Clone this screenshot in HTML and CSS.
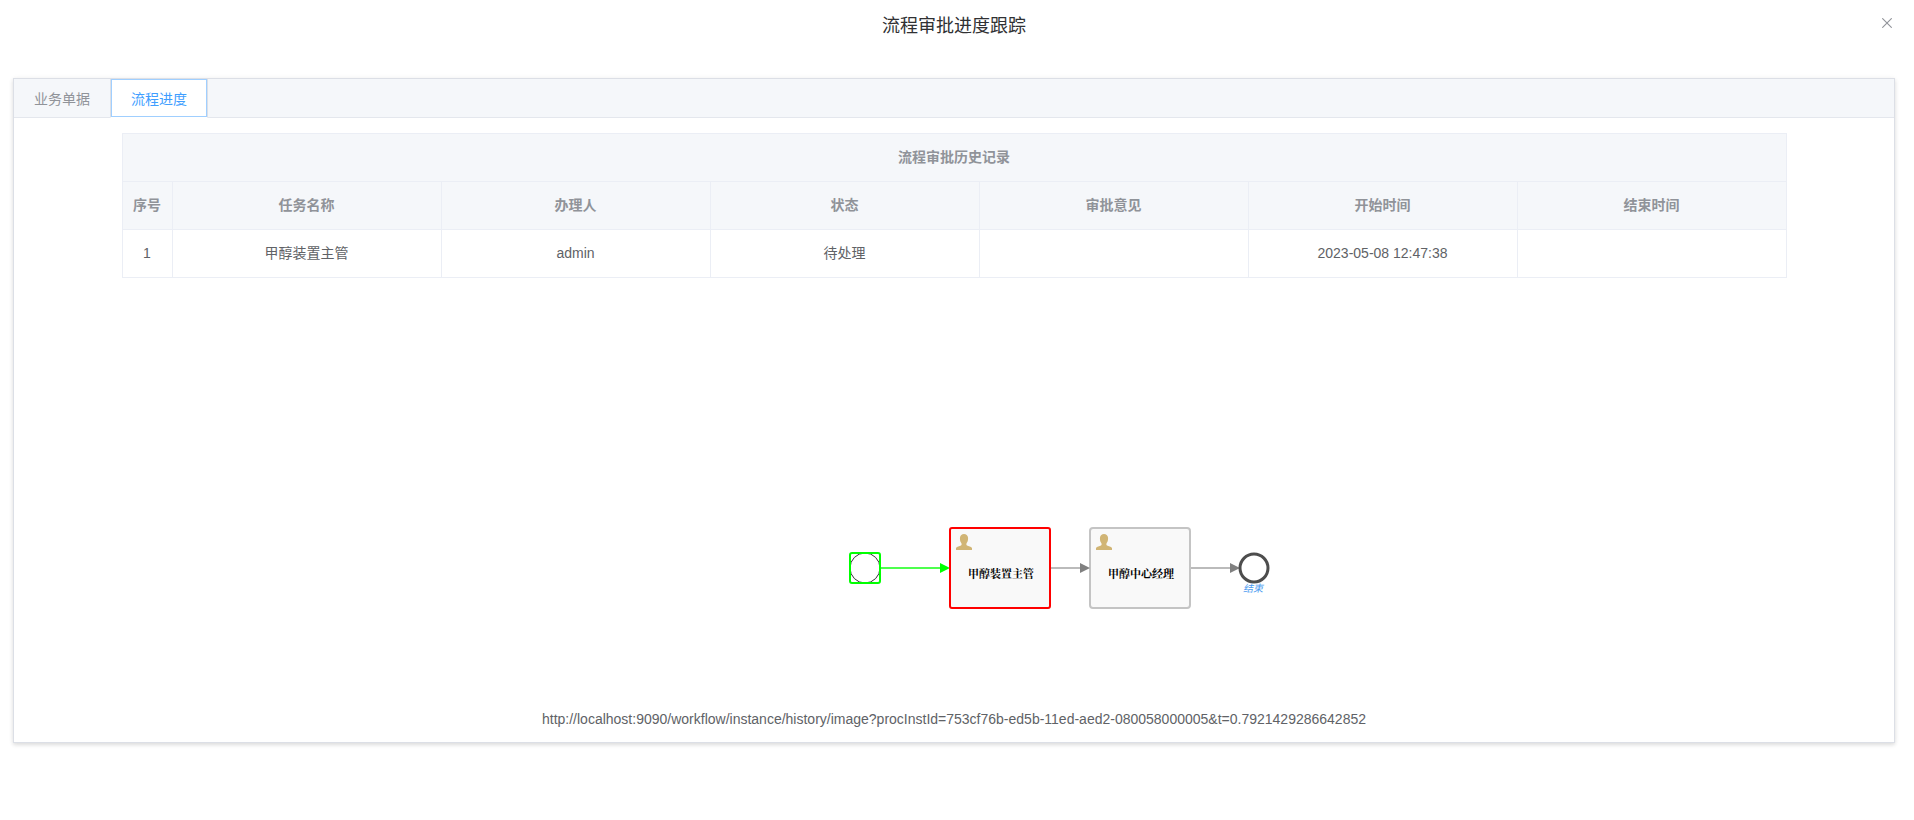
FILE: index.html
```html
<!DOCTYPE html>
<html lang="zh-CN">
<head>
<meta charset="utf-8">
<meta name="viewport" content="width=device-width, initial-scale=1">
<title>流程审批进度跟踪</title>
<link rel="stylesheet" href="styles.css">
</head>
<body>
<main class="dialog">
  <header class="dialog-header">
    <h1 class="dialog-title">流程审批进度跟踪</h1>
    <button class="dialog-close" type="button" aria-label="关闭">
      <svg width="10" height="10" viewBox="0 0 10 10" aria-hidden="true"><path d="M0.3 0.3 9.7 9.7M9.7 0.3 0.3 9.7"/></svg>
    </button>
  </header>
  <section class="panel">
    <div class="tabs" role="tablist">
      <button class="tab" type="button" role="tab" aria-selected="false">业务单据</button>
      <button class="tab tab-active" type="button" role="tab" aria-selected="true">流程进度</button>
    </div>
    <div class="panel-body" role="tabpanel">
      <table class="history">
        <colgroup><col class="col-index"><col><col><col><col><col><col></colgroup>
        <thead>
          <tr><th colspan="7">流程审批历史记录</th></tr>
          <tr><th>序号</th><th>任务名称</th><th>办理人</th><th>状态</th><th>审批意见</th><th>开始时间</th><th>结束时间</th></tr>
        </thead>
        <tbody>
          <tr><td>1</td><td>甲醇装置主管</td><td>admin</td><td>待处理</td><td></td><td>2023-05-08 12:47:38</td><td></td></tr>
        </tbody>
      </table>
      <svg class="diagram" width="640" height="433" viewBox="0 0 640 433" role="img" aria-label="流程图">
        <defs>
          <path id="user" d="M0 16v-2c1-1.500 3.500-1.500 5-2.500.8-.5.8-1.500.3-2.500C4 7.500 3.800 5 4 3.500 4.300 1.200 5.800 0 8 0s3.700 1.200 4 3.500c.2 1.500 0 4-1.300 5.500-.5 1-.5 2 .3 2.500 1.500 1 4 1 5 2.500v2z"/>
        </defs>
        <circle class="start-ring" cx="231" cy="290" r="15"/>
        <rect class="start-box" x="216" y="275" width="30" height="30" rx="2"/>
        <path class="flow flow-done" d="M247 290h60"/>
        <path class="arrow-done" d="M306 285v10l10-5z"/>
        <path class="flow" d="M417 290h30M557 290h40"/>
        <rect class="task task-current" x="316" y="250" width="100" height="80" rx="2"/>
        <rect class="task" x="456" y="250" width="100" height="80" rx="3"/>
        <path class="arrow" d="M446 285v10l10-5zM596 285v10l10-5z"/>
        <use class="user" href="#user" x="322" y="256"/>
        <use class="user" href="#user" x="462" y="256"/>
        <text class="task-label" x="367" y="300">甲醇装置主管</text>
        <text class="task-label" x="507" y="300">甲醇中心经理</text>
        <circle class="end-ring" cx="620" cy="290" r="14"/>
        <text class="end-label" x="619" y="314">结束</text>
      </svg>
      <p class="image-url">http://localhost:9090/workflow/instance/history/image?procInstId=753cf76b-ed5b-11ed-aed2-080058000005&amp;t=0.7921429286642852</p>
    </div>
  </section>
</main>
</body>
</html>
```
FILE: styles.css
```css
* {
  box-sizing: border-box;
}

body {
  margin: 0;
  background: #fff;
  color: #606266;
  font-family: "Liberation Sans", "Noto Sans CJK SC", sans-serif;
  font-size: 14px;
}

.dialog {
  padding: 14px 19px 14px 13px;
}

.dialog-header {
  display: grid;
  grid-template-columns: 16px 1fr 16px;
  margin-bottom: 40px;
}

.dialog-title {
  grid-column: 2;
  margin: 0;
  color: #303133;
  font-size: 18px;
  font-weight: 400;
  line-height: 24px;
  text-align: center;
}

.dialog-close {
  display: flex;
  align-items: center;
  justify-content: center;
  height: 18px;
  padding: 0;
  border: 0;
  background: none;
  cursor: pointer;
}

.dialog-close path {
  fill: none;
  stroke: #909399;
  stroke-width: 1.1;
}

.panel {
  border: 1px solid #dcdfe6;
  background: #fff;
  box-shadow: 0 2px 4px rgba(0, 0, 0, 0.12), 0 0 6px rgba(0, 0, 0, 0.04);
}

.tabs {
  display: flex;
  border-bottom: 1px solid #e4e7ed;
  background: #f5f7fa;
}

.tab {
  height: 39px;
  margin: 0 0 -1px -1px;
  padding: 0 20px;
  border: 1px solid transparent;
  border-top: 0;
  background: none;
  color: #909399;
  font: inherit;
  cursor: pointer;
}

.tab-active {
  border-right-color: #dcdfe6;
  border-bottom-color: #fff;
  border-left-color: #dcdfe6;
  background: #fff;
  box-shadow: inset 0 0 0 1px #a0cfff;
  color: #409eff;
}

.panel-body {
  padding: 15px;
}

.history {
  width: 90%;
  margin: 0 auto;
  border: 1px solid #ebeef5;
  border-width: 1px 0 0 1px;
  border-collapse: separate;
  border-spacing: 0;
  table-layout: fixed;
  text-align: center;
}

.col-index {
  width: 50px;
}

.history th,
.history td {
  height: 48px;
  padding: 0;
  border: 1px solid #ebeef5;
  border-width: 0 1px 1px 0;
  line-height: 23px;
}

.history th {
  background: #f5f7fa;
  color: #909399;
  font-weight: 700;
}

.diagram {
  display: block;
  max-width: 100%;
  height: auto;
  margin: 0 auto;
}

.start-ring {
  fill: #fff;
  stroke: #333;
}

.start-box {
  fill: none;
  stroke: #0f0;
  stroke-width: 2;
}

.flow {
  fill: none;
  stroke: #bbb;
  stroke-width: 2;
}

.flow-done {
  stroke: #4dff4d;
}

.arrow {
  fill: #808080;
}

.arrow-done {
  fill: #0f0;
}

.task {
  fill: #f9f9f9;
  stroke: #c4c4c4;
  stroke-width: 2;
}

.task-current {
  stroke: #f00;
}

.user {
  fill: #d1b575;
}

.task-label {
  fill: #000;
  font-family: "Liberation Serif", "Noto Serif CJK SC", "Noto Sans CJK SC", serif;
  font-size: 11px;
  font-weight: 700;
  text-anchor: middle;
}

.end-ring {
  fill: #fff;
  stroke: #4d4d4d;
  stroke-width: 3;
}

.end-label {
  fill: #4c9bf0;
  font-size: 10px;
  font-style: italic;
  text-anchor: middle;
}

.image-url {
  margin: 0;
  line-height: 16px;
  overflow-wrap: anywhere;
  text-align: center;
}
```
